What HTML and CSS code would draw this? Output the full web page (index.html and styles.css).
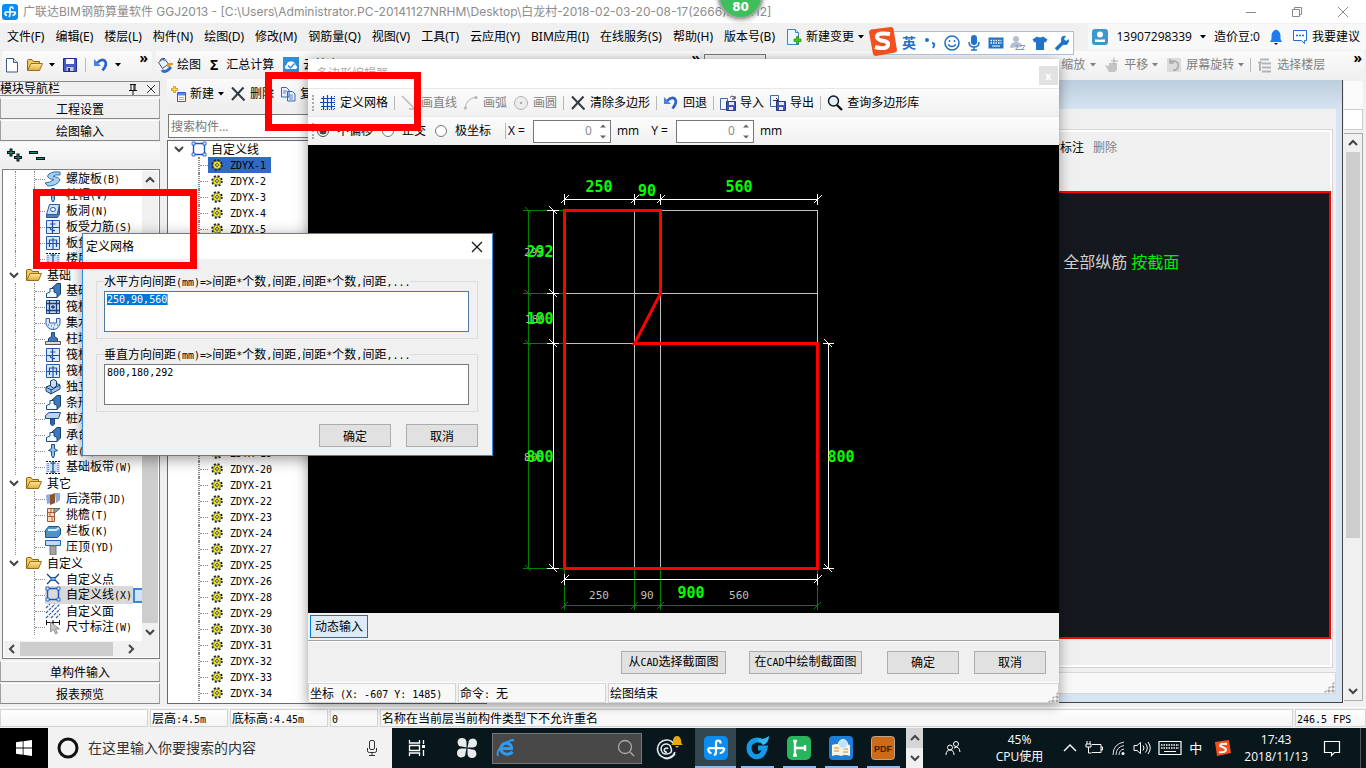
FILE: index.html
```html
<!DOCTYPE html>
<html lang="zh-CN">
<head>
<meta charset="utf-8">
<title>广联达BIM钢筋算量软件 GGJ2013</title>
<link rel="stylesheet" href="styles.css">
</head>
<body>
<svg class="defs" aria-hidden="true">
  <defs>
    <linearGradient id="gFold" x1="0" y1="0" x2="0" y2="1"><stop offset="0" stop-color="#ffe9a0"/><stop offset="1" stop-color="#e3a83a"/></linearGradient>
  </defs>
  <symbol id="logo" viewBox="0 0 16 16"><rect width="16" height="16" rx="3" fill="#0a8cf0"/><path d="M11 5V4.500Q11 3 9.500 3T8 4.500V11Q8 12.500 6.500 12.500M3 8H13.500M3 8Q2.500 11 5 11.500M13.500 8Q13.500 11 10.500 11.500" fill="none" stroke="#fff" stroke-width="1.500"/></symbol>
  <symbol id="doc" viewBox="0 0 16 16"><path d="M2.500 1.500h7l4 4v9.500h-11z" fill="#fff" stroke="#3a5a84"/><path d="M9.500 1.500v4h4" fill="#d7e6f5" stroke="#3a5a84"/></symbol>
  <symbol id="docplus" viewBox="0 0 16 16"><path d="M1.500.5h8l3 3v12h-11z" fill="#eef7ff" stroke="#3b87b8"/><path d="M9.500.5v3h3" fill="#cfe4f4" stroke="#3b87b8"/><path d="M10.500 7.500h2v2.500H15v2.500h-2.500V15h-2v-2.500H8V10h2.500z" fill="#49c31e" stroke="#22880c" stroke-width=".7"/></symbol>
  <symbol id="folder" viewBox="0 0 16 16"><path d="M.5 13V3.500Q.5 2.500 1.500 2.500H5l1.500 2h6V7" fill="#f2c860" stroke="#8a6414"/><path d="M.5 13.500L4 6.500H15.500L12.500 13.500z" fill="url(#gFold)" stroke="#9a7018"/></symbol>
  <symbol id="save" viewBox="0 0 16 16"><path d="M1.500 1.500h13v13h-13z" fill="#4759c4" stroke="#1e2f86"/><path d="M4 2h8v5H4z" fill="#f3f5ff"/><path d="M4.500 10h7v4h-7z" fill="#c3c8dd"/><path d="M6 11h2v3H6z" fill="#22307c"/></symbol>
  <symbol id="undo" viewBox="0 0 16 16"><path d="M4 6Q8 1.500 11.500 3.500Q15 7 9.500 13.500" fill="none" stroke="#2e62c8" stroke-width="2.600"/><path d="M1 2v7h7z" fill="#4c82dd"/></symbol>
  <symbol id="paint" viewBox="0 0 16 16"><path d="M1.500 5.500L7 1l4.500 6-6 4.500z" fill="#e8f0fa" stroke="#36506e"/><path d="M3 4Q5-1 7.500 4" fill="none" stroke="#36506e"/><path d="M10 9q5-3 5-1" stroke="#d39a2c" stroke-width="3" fill="none"/><path d="M5 13q2 3 6 0l3-3" stroke="#2f6ad1" stroke-width="3" fill="none"/></symbol>
  <symbol id="cloud" viewBox="0 0 16 16"><rect width="16" height="16" fill="#2b8ed8"/><path d="M3 12Q.5 9.500 3.500 8Q4 4 8 4.500Q12 4 12.500 8Q15.500 10 13 12z" fill="#fff"/><path d="M5 8.500l2.500 2.500L11.500 6.500" fill="none" stroke="#2b8ed8" stroke-width="1.500"/></symbol>
  <symbol id="newitem" viewBox="0 0 16 16"><path d="M3.500.5h2v2h2v2h-2v2h-2v-2h-2v-2h2z" fill="#ffdc4a" stroke="#b58508" stroke-width=".7"/><path d="M7.500 6.500h8v9h-8z" fill="#fff" stroke="#2f5fb4"/><path d="M8 7h7v2.500H8z" fill="#5b8be0"/><path d="M9 11.500h5M9 13.500h5" stroke="#8db0e8"/></symbol>
  <symbol id="cross" viewBox="0 0 16 16"><path d="M2 1.500L14.500 14.500M13.500 1.500L2 14" stroke="#333a44" stroke-width="2" fill="none"/></symbol>
  <symbol id="copy" viewBox="0 0 16 16"><path d="M1.500 1.500h5l2.500 2.500v7h-7.500zM7.500 5.500h5l2.500 2.500v7h-7.500z" fill="#e7effc" stroke="#3a64b0"/><path d="M3 5h4M3 7h3M9 9h4M9 11h4M9 13h4" stroke="#5b84cc"/></symbol>
  <symbol id="grid" viewBox="0 0 16 16"><path d="M1 3.500h14M0 7.500h14M1 11.500h14M3.500 1v14M7.500 0v15M11.500 1v14" stroke="#1645b4" stroke-width="1.200"/><path d="M14.500 1v14M1 14.500h13" stroke="#1645b4" stroke-dasharray="1 1"/></symbol>
  <symbol id="line" viewBox="0 0 16 16"><path d="M1 1L13 13M14 8v6H8" stroke="#b5b5b5" stroke-width="1.300" fill="none"/></symbol>
  <symbol id="arc" viewBox="0 0 16 16"><path d="M2 14Q3 4 13 2" stroke="#b0b0b0" fill="none"/><circle cx="2.500" cy="13" r="1.500" fill="#b5b5b5"/><circle cx="13" cy="2.500" r="1.500" fill="#b5b5b5"/></symbol>
  <symbol id="circ" viewBox="0 0 16 16"><circle cx="8" cy="8" r="6.500" stroke="#b4b4b4" fill="#ececec"/><circle cx="8" cy="8" r="1" fill="#999"/></symbol>
  <symbol id="imp" viewBox="0 0 16 16"><path d="M.5 3.500h7v11h-7z" fill="#f4f7fd" stroke="#4668a8"/><path d="M6.500 6.500h9v9h-9z" fill="#4356b4" stroke="#27377f"/><path d="M9 7h5v3H9zM9 12h4v3H9z" fill="#e6eaf8"/><path d="M10 2.500q3-3 5 1M15 1v3h-3" fill="none" stroke="#333"/></symbol>
  <symbol id="exp" viewBox="0 0 16 16"><path d="M.5.5h8v11h-8z" fill="#f4f7fd" stroke="#4668a8"/><path d="M6.500 6.500h9v9h-9z" fill="#4356b4" stroke="#27377f"/><path d="M9 7h5v3H9zM9 12h4v3H9z" fill="#e6eaf8"/><path d="M3 5.500h5M6 3l2.500 2.500L6 8" fill="none" stroke="#333"/></symbol>
  <symbol id="mag" viewBox="0 0 16 16"><circle cx="6.500" cy="6" r="5" fill="#dff1ff" stroke="#111" stroke-width="1.400"/><path d="M10 10l5 5" stroke="#111" stroke-width="2.400"/></symbol>
  <symbol id="hand" viewBox="0 0 16 16"><path d="M1 8l4 1V6h8v7l-2 2H5z" fill="#c4c4c4"/><path d="M10 .5v7M7 4h7" stroke="#aaa"/></symbol>
  <symbol id="rot" viewBox="0 0 16 16"><path d="M1 1h14v14H1z" fill="#dcdcdc"/><path d="M4 6a4.500 4.500 0 1 1 3 7M4 2v4h4" fill="none" stroke="#aaa" stroke-width="1.600"/></symbol>
  <symbol id="floor" viewBox="0 0 16 16"><path d="M3 2.500h9M5 6.500h9M5 10.500h9M5 14.500h9M1 5.500h4M3 5v9" stroke="#b4b4b4" stroke-width="2" fill="none"/></symbol>
  <symbol id="gear" viewBox="0 0 12 12"><circle cx="6" cy="6" r="4.800" fill="none" stroke="#222" stroke-width="2" stroke-dasharray="2 1.770"/><circle cx="6" cy="6" r="4" fill="#f6ee12" stroke="#444" stroke-width=".6"/><path d="M6 2.500v7M2.500 6h7" stroke="#b8b000" stroke-width=".7"/><circle cx="6" cy="6" r="1.400" fill="#fff" stroke="#222" stroke-width=".8"/></symbol>
  <symbol id="poly" viewBox="0 0 16 16"><path d="M2.500 2.500h11v11h-11z" fill="none" stroke="#1956c8" stroke-width="1.400"/><path d="M1 1h3v3H1zM12 1h3v3h-3zM1 12h3v3H1zM12 12h3v3h-3z" fill="#dbe9ff" stroke="#1956c8" stroke-width=".8"/></symbol>
  <symbol id="spiral" viewBox="0 0 16 16"><path d="M15 1Q5 0 2.500 5Q3 8 9 8.500Q5 12 0 12l3 3q9 0 12-6Q14 6 8 5.500Q10 3 15 4z" fill="#a9d0f3" stroke="#2b6cb0"/></symbol>
  <symbol id="pile" viewBox="0 0 16 16"><path d="M6.500 1.500h3v4l3 2-3 1v4L8 15l-1.500-2.500v-4l-3-1 3-2z" fill="#8fbbe8" stroke="#184c8c"/></symbol>
  <symbol id="hole" viewBox="0 0 16 16"><path d="M4.500 1.500h10l-2 10H1.500z" fill="#cfe1f5" stroke="#2458a0"/><path d="M1.500 11.500v3h11l2-3v-9l-2 9z" fill="#4f80bc" stroke="#2458a0"/><ellipse cx="8" cy="6.500" rx="2.500" ry="2" fill="#fff" stroke="#2458a0"/></symbol>
  <symbol id="rebar" viewBox="0 0 16 16"><path d="M1.500 1.500h13v13h-13z" fill="#dbe9fb" stroke="#2458b0"/><path d="M2 8.500h12M7.500 2v12M5 5h5.500M5 8q0 4 5 3.500" fill="none" stroke="#1c4ea8" stroke-width="1.200"/></symbol>
  <symbol id="rebar2" viewBox="0 0 16 16"><path d="M1.500 1.500h13v13h-13z" fill="#dbe9fb" stroke="#2458b0"/><path d="M2 8.500h12M4.500 5v7M8 3v11M11.500 5v7M4 5h8" fill="none" stroke="#1c4ea8" stroke-width="1.200"/></symbol>
  <symbol id="strip" viewBox="0 0 16 16"><path d="M1 4h14v9H1z" fill="#cfe1fa"/><path d="M1 2.500h14M1 14.500h14" stroke="#111" stroke-dasharray="2 1"/><path d="M3 4v9M13 4v9" stroke="#555" stroke-dasharray="1 1"/><path d="M5.500 4h5M8 4v9M5.500 13h5" stroke="#2458b0" stroke-width="1.400"/></symbol>
  <symbol id="beam" viewBox="0 0 16 16"><path d="M7 5l5-4.500h3.500V11L12 14.500z" fill="#3f78b8" stroke="#153d6c"/><path d="M1.500 14.500v-4L5 9V5.500h4V9l3 1.500v4z" fill="#eef6ff" stroke="#1c4880"/></symbol>
  <symbol id="raft" viewBox="0 0 16 16"><path d="M1.500 1.500h13v13h-13z" fill="#c4daf5" stroke="#173f80"/><path d="M4.500 2v12M11.500 2v12M2 4.500h12M2 11.500h12M6 8h4M8 6v4" stroke="#173f80" stroke-width="1.300"/></symbol>
  <symbol id="pit" viewBox="0 0 16 16"><path d="M1 3.500h3.500V8h7V3.500H15V9q-2 5.500-7 5.500T1 9z" fill="#dcebfb" stroke="#2a5cae"/><path d="M3 10h1M6 11h1M9 10h1M12 10h1M8 13h1" stroke="#16407c"/></symbol>
  <symbol id="pier" viewBox="0 0 16 16"><path d="M6.500 1.500h3v4l3 2v3h-9v-3l3-2z" fill="#3f75ba" stroke="#1d477f"/><path d="M.5 10.500h15v3H.5z" fill="#d9d9d9" stroke="#555"/></symbol>
  <symbol id="solo" viewBox="0 0 16 16"><path d="M1 8l10-4 4 2v4l-9 5-5-3z" fill="#9cc2e8" stroke="#173f72"/><path d="M1 8l5 3 9-5M6 11v4" fill="none" stroke="#173f72"/><path d="M5.500 2l3-1.500 3 1.500v5l-3 2-3-2z" fill="#cbdff4" stroke="#173f72"/></symbol>
  <symbol id="cap" viewBox="0 0 16 16"><path d="M.5 4.500L4 1.500h11.500l-2 6H.5z" fill="#b9d5f0" stroke="#1c4a86"/><path d="M5.500 8h4v5L7.500 15l-2-2z" fill="#2b65ae" stroke="#1c4a86"/></symbol>
  <symbol id="wall" viewBox="0 0 16 16"><path d="M1 4l5-1v9l-4 1zM10 2h5v7l-4 3z" fill="#8bacd8"/><path d="M5 4l5-2v10l-5 2z" fill="#8a5430"/></symbol>
  <symbol id="eave" viewBox="0 0 16 16"><path d="M2.500 1.500h7v13h-7z" fill="#f8dfc8" stroke="#a4522a"/><path d="M3 5.500h6M3 9.500h6M6 2v3M5 6v3M7 10v4" stroke="#b45c2e"/><path d="M9 1.500h6l-6 5z" fill="#90a8a0" stroke="#51685e"/></symbol>
  <symbol id="rail" viewBox="0 0 16 16"><path d="M.5 7.500l3-4 10 0 2 2v6l-3 3H.5z" fill="#4c94ca" stroke="#1c5484"/><path d="M3 7h8l3-2" stroke="#d3e9f8" stroke-width="2" fill="none"/></symbol>
  <symbol id="coping" viewBox="0 0 16 16"><path d="M.5 1.500h15v5H.5z" fill="#b9dbf8" stroke="#1c62b8"/><path d="M5 7h6v9H5z" fill="#a4a4a4" stroke="#777"/></symbol>
  <symbol id="point" viewBox="0 0 16 16"><path d="M2 3l4 4M10 9l4 4M14 3l-4 4M6 9l-4 4" stroke="#1c3e72" stroke-width="1.200"/><path d="M6 6.500h4v3H6z" fill="#7fb0ec" stroke="#1c5cc0"/></symbol>
  <symbol id="hatch" viewBox="0 0 16 16"><path d="M1 5l4-4M1 10l9-9M1 15L15 1M6 15l9-9M11 15l4-4" stroke="#2a5cae" stroke-width="1.200" stroke-dasharray="3 1"/></symbol>
  <symbol id="dim" viewBox="0 0 16 16"><path d="M1 3.500h14M1.500 1v5M14.500 1v5M8 1v5" stroke="#111"/><path d="M5.500 3v10l3-2.500 2 4.500 2-1-2-4h4z" fill="#c4c4c4" stroke="#777" stroke-width=".7"/></symbol>
  <symbol id="chev" viewBox="0 0 10 10"><path d="M1 3l4 4 4-4" fill="none" stroke="#444" stroke-width="2"/></symbol>
  <symbol id="tri" viewBox="0 0 6 4"><path d="M0 0h6L3 3.500z" fill="currentColor"/></symbol>
</svg>

<header class="title-bar">
  <svg class="i16"><use href="#logo"/></svg>
  <h1>广联达BIM钢筋算量软件 GGJ2013 - [C:\Users\Administrator.PC-20141127NRHM\Desktop\白龙村-2018-02-03-20-08-17(2666).GGJ12]</h1>
  <div class="win-btns">
    <button aria-label="最小化"><svg class="i12" viewBox="0 0 12 12"><path d="M1 6.500h10" stroke="#888"/></svg></button>
    <button aria-label="还原"><svg class="i12" viewBox="0 0 12 12"><path d="M1.500 3.500h7v7h-7zM3.500 3.500v-2h7v7h-2" fill="none" stroke="#888"/></svg></button>
    <button aria-label="关闭"><svg class="i12" viewBox="0 0 12 12"><path d="M1 1l10 10M11 1L1 11" stroke="#888"/></svg></button>
  </div>
</header>

<nav class="menu-bar">
  <button>文件(F)</button><button>编辑(E)</button><button>楼层(L)</button><button>构件(N)</button><button>绘图(D)</button><button>修改(M)</button><button>钢筋量(Q)</button><button>视图(V)</button><button>工具(T)</button><button>云应用(Y)</button><button>BIM应用(I)</button><button>在线服务(S)</button><button>帮助(H)</button><button>版本号(B)</button>
  <button class="with-icon"><svg class="i16"><use href="#docplus"/></svg>新建变更<svg class="tri"><use href="#tri"/></svg></button>
  <div class="account">
    <svg class="i16" viewBox="0 0 16 16"><rect width="16" height="16" rx="3" fill="#3f97cf"/><circle cx="8" cy="5.500" r="3" fill="#fff"/><path d="M3 13V10.500h10V13z" fill="#fff"/><path d="M6.500 9L8 11l1.500-2z" fill="#3f97cf"/></svg>
    <button class="with-icon phone">13907298339<svg class="tri"><use href="#tri"/></svg></button>
    <span>造价豆:0</span>
    <svg class="i16" viewBox="0 0 16 16"><path d="M8 .5Q12.500 2 12.500 7v3l1.500 3H2l1.500-3V7Q3.500 2 8 .5z" fill="#1e7cf0"/><path d="M6 14h4l-2 2z" fill="#111"/></svg>
    <button class="with-icon"><svg class="i16" viewBox="0 0 16 16"><path d="M1.500 1.500h13v10h-2v3l-3-3h-8z" fill="#fff" stroke="#1e6ce0"/><path d="M4 6.500h8" stroke="#1e6ce0" stroke-width="1.500" stroke-dasharray="2 1"/></svg>我要建议</button>
  </div>
</nav>

<div class="tool-bar">
  <div class="band file-band">
    <button aria-label="新建"><svg class="i16"><use href="#doc"/></svg></button>
    <button aria-label="打开" class="with-icon wide"><svg class="i16"><use href="#folder"/></svg><svg class="tri"><use href="#tri"/></svg></button>
    <button aria-label="保存"><svg class="i16"><use href="#save"/></svg></button>
    <i class="sep"></i>
    <button aria-label="撤销" class="with-icon wide"><svg class="i16"><use href="#undo"/></svg><svg class="tri"><use href="#tri"/></svg></button>
    <b class="more">»</b>
  </div>
  <div class="band calc-band">
    <button class="with-icon"><svg class="i16"><use href="#paint"/></svg>绘图</button>
    <button class="with-icon"><b class="sigma">Σ</b>汇总计算</button>
    <button class="with-icon"><svg class="i16"><use href="#cloud"/></svg>云检查</button>
    <b class="more">»</b>
  </div>
  <div class="band view-band">
    <select aria-label="楼层"><option>首层</option></select>
    <button class="with-icon" disabled><span class="zoom">缩放</span><svg class="tri"><use href="#tri"/></svg></button>
    <button class="with-icon" disabled><svg class="i16"><use href="#hand"/></svg>平移<svg class="tri"><use href="#tri"/></svg></button>
    <button class="with-icon" disabled><svg class="i16"><use href="#rot"/></svg>屏幕旋转<svg class="tri"><use href="#tri"/></svg></button>
    <i class="sep"></i>
    <button class="with-icon" disabled><svg class="i16"><use href="#floor"/></svg>选择楼层</button>
    <b class="more">»</b>
  </div>
</div>

<main class="work">
  <aside class="side">
    <div class="side-head"><span>模块导航栏</span>
      <svg class="i12" viewBox="0 0 12 12"><path d="M3 1.500h6M4 2v5M8 2v5M7 2v5M2 7.500h8M6 8v4" stroke="#111" fill="none"/></svg>
      <svg class="i12" viewBox="0 0 12 12"><path d="M2 2l8 8M10 2l-8 8" stroke="#333"/></svg>
    </div>
    <button class="side-btn">工程设置</button>
    <button class="side-btn">绘图输入</button>
    <div class="side-tools">
      <button aria-label="展开"><svg viewBox="0 0 18 16"><path d="M1 5.500h8M5 1.500v8M8 10.500h8M12 6.500v8" stroke="#111" stroke-width="3"/><path d="M2 5.500h6M5 2.500v6M9 10.500h6M12 7.500v6" stroke="#1e8878"/></svg></button>
      <button aria-label="折叠"><svg viewBox="0 0 18 16"><path d="M1 5.500h9M8 11.500h9" stroke="#111" stroke-width="3"/><path d="M2 5.500h7M9 11.500h7" stroke="#1e8878"/></svg></button>
    </div>
    <div class="tree-box">
      <ul class="tree" id="navTree"></ul>
      <div class="vbar"><svg class="i10 flip"><use href="#chev"/></svg><i class="gap-bar"></i><i class="thumb-v"></i><svg class="i10"><use href="#chev"/></svg></div>
      <div class="hbar"><svg class="i10 left"><use href="#chev"/></svg><i></i><svg class="i10 right"><use href="#chev"/></svg></div>
    </div>
    <button class="side-btn">单构件输入</button>
    <button class="side-btn">报表预览</button>
  </aside>

  <section class="list-pane">
    <div class="list-tools">
      <button class="with-icon"><svg class="i16"><use href="#newitem"/></svg>新建<svg class="tri"><use href="#tri"/></svg></button>
      <button class="with-icon"><svg class="i16"><use href="#cross"/></svg>删除</button>
      <button class="with-icon"><svg class="i16"><use href="#copy"/></svg>复制</button>
    </div>
    <input class="search" type="text" placeholder="搜索构件..." aria-label="搜索构件">
    <ul class="comp-list" id="compList"></ul>
  </section>

  <section class="mdi">
    <div class="mdi-panel">
      <div class="mdi-tab">
        <div class="mdi-tools"><button>尺寸标注</button><button disabled>删除</button></div>
        <div class="mdi-canvas"><p>角筋 全部纵筋 <em>按截面</em></p></div>
      </div>
    </div>
    <div class="mdi-status"><i class="grip"></i></div>
  </section>
  <div class="outer-scroll">
    <div class="outer-top"></div>
    <div class="outer-field"></div>
    <div class="vbar outer"><svg class="i10 flip"><use href="#chev"/></svg><i class="thumb-o"></i><i class="rest"></i><svg class="i10"><use href="#chev"/></svg></div>
  </div>
</main>

<footer class="app-status sim">
  <div class="c1"></div><div class="c2">层高:4.5m</div><div class="c3">底标高:4.45m</div><div class="c4">0</div><div class="c5">名称在当前层当前构件类型下不允许重名</div><div class="c6">246.5 FPS</div>
</footer>

<div class="task-bar">
  <button class="start" aria-label="开始"><svg class="i16" viewBox="0 0 16 16"><path d="M0 2.300L6.700 1.300v6.300H0zM7.500 1.200L16 0v7.600H7.500zM0 8.400h6.700v6.300L0 13.700zM7.500 8.400H16V16l-8.500-1.200z" fill="#fff"/></svg></button>
  <label class="cortana">
    <svg class="i22" viewBox="0 0 22 22"><circle cx="11" cy="11" r="9" fill="none" stroke="#111" stroke-width="3"/></svg>
    <input type="text" placeholder="在这里输入你要搜索的内容" aria-label="搜索">
    <svg class="i16" viewBox="0 0 16 16"><rect x="5.500" y=".5" width="5" height="9" rx="1.500" fill="none" stroke="#333"/><path d="M3.500 8v3q0 1.500 2 1.500h5q2 0 2-1.500V8M8 13v2.500M5 15.500h6" fill="none" stroke="#333"/></svg>
  </label>
  <button class="t-btn first" aria-label="任务视图"><svg class="i18" viewBox="0 0 18 18"><path d="M1.500 1v3h10V1M1.500 17v-3h10v3M1.500 6.500h10v5h-10zM15.500 1v4M15.500 11v6" fill="none" stroke="#fff" stroke-width="1.300"/><path d="M14 6h3v3h-3z" fill="#fff"/></svg></button>
  <button class="t-btn" aria-label="浏览器"><svg class="i22" viewBox="0 0 22 22"><g fill="#e6ecee"><path d="M10.500 10.500V5Q10 1 6 1T1.500 5Q2 10 6 9.500z"/><path d="M11.500 10.500H17Q21 10 21 6T17 1.500Q12 2 12.500 6z"/><path d="M11.500 11.500V17Q12 21 16 21T20.500 17Q20 12 16 12.500z"/><path d="M10.500 11.500H5Q1 12 1 16T5 20.500Q10 20 9.500 16z"/></g></svg></button>
  <label class="ie-box">
    <svg class="i20" viewBox="0 0 20 20"><path d="M16.500 14Q13 17 9.500 16Q5 14.500 5 10.500Q5.500 5.500 10 5Q15.500 5.500 15.500 10.500H6" fill="none" stroke="#2d9bf4" stroke-width="3"/><path d="M2 18Q0 14 6 8T18 2" fill="none" stroke="#2d9bf4" stroke-width="1.800"/></svg>
    <input type="text" aria-label="地址">
    <svg class="i18" viewBox="0 0 18 18"><circle cx="8" cy="8" r="6.500" fill="none" stroke="#aaa" stroke-width="1.300"/><path d="M13 13l4 4" stroke="#aaa" stroke-width="1.300"/></svg>
  </label>
  <button class="t-btn" aria-label="提醒"><svg class="i28" viewBox="0 0 28 28"><path d="M19 10A9 9 0 1 0 20 18M16 14a5 5 0 1 0-5 6q7 0 5-6M13 15a2 2 0 1 0-1 3M6 22Q13 28 20 20" fill="none" stroke="#e6ecee" stroke-width="1.600"/><path d="M16 11q2-1 2-5 1-4 4-4t4 4q0 4 2 5zM20 12h4l-2 2z" fill="#e5a912"/></svg></button>
  <button class="app active" aria-label="GGJ2013"><svg class="i24"><use href="#logo"/></svg></button>
  <button class="app" aria-label="浏览器"><svg class="i24" viewBox="0 0 24 24"><path d="M16 4.500Q8 2.500 4.500 9Q2.500 17 9.500 20.500Q18 22 20 12h-7" fill="none" stroke="#1399e8" stroke-width="5"/><path d="M12 3Q18 4 24 0q0 7-6 9z" fill="#36b8f8"/></svg></button>
  <button class="app" aria-label="钢筋"><svg class="i24" viewBox="0 0 24 24"><rect width="24" height="24" rx="5" fill="#27b65e"/><path d="M8 5v15M8 12h11M18 9v6M6 5h4M6 19.500h4" stroke="#fff" stroke-width="2.400"/></svg></button>
  <button class="app" aria-label="资料"><svg class="i24" viewBox="0 0 24 24"><rect width="24" height="24" rx="4" fill="#1f7fd8"/><path d="M3 9q5-2 9 0 4-2 9 0v11q-5-2-9 0-4-2-9 0z" fill="#fff3d8"/><path d="M5 12h5M5 15h5M14 13h5M14 16h5" stroke="#c08a50"/><circle cx="14" cy="8" r="4.500" fill="#bfe2fb" stroke="#e8f4ff"/></svg></button>
  <button class="app" aria-label="PDF"><svg class="i24" viewBox="0 0 24 24"><rect x=".5" y=".5" width="23" height="23" rx="3" fill="#cc6a15" stroke="#b9a795"/><text x="12" y="16" text-anchor="middle" class="pdf">PDF</text></svg></button>
  <div class="t-scroll"><svg class="i10 flip"><use href="#chev"/></svg><svg class="i10"><use href="#chev"/></svg></div>
  <div class="tray">
    <svg class="i16 people" viewBox="0 0 16 16"><circle cx="11" cy="4" r="2.500" fill="none" stroke="#fff"/><circle cx="5" cy="7.500" r="2.500" fill="none" stroke="#fff"/><path d="M1 15q0-5 4-5t4 5M9 8q5-3 6 4" fill="none" stroke="#fff"/></svg>
    <div class="meter"><span>45%</span><span>CPU使用</span></div>
    <svg class="i16" viewBox="0 0 16 16"><path d="M2 11l6-6 6 6" fill="none" stroke="#fff" stroke-width="1.400"/></svg>
    <svg class="i18" viewBox="0 0 18 18"><path d="M7 5.500h9v8H7M16 8h1.500v3H16M2 2v3M5 2v3M1 5h5v3H1zM3.500 8v6h3" fill="none" stroke="#fff"/></svg>
    <svg class="i16" viewBox="0 0 16 16"><path d="M3 15Q3 4 14 2M6 15Q6 7 14 5.500M9 15Q9 10 14 9" fill="none" stroke="#ddd"/><circle cx="13" cy="13.500" r="1.500" fill="#fff"/></svg>
    <svg class="i18" viewBox="0 0 18 18"><path d="M1 6.500h3l3.500-3v11L4 11.500H1zM10 6.500q2 2.500 0 5M12.500 4.500q3.500 4.500 0 9M15 3q4.500 6 0 12" fill="none" stroke="#fff"/></svg>
    <svg class="kbd" viewBox="0 0 24 18"><path d="M1 2.500h22v13H1z" fill="none" stroke="#fff" stroke-width="1.200"/><path d="M3 6h18M3 9h18" stroke="#fff" stroke-width="1.500" stroke-dasharray="1.500 1"/><path d="M6 12.500h12" stroke="#fff"/></svg>
    <span class="ime">中</span>
    <svg class="i16" viewBox="0 0 16 16"><path d="M0 2l14-2 2 13-14 3z" fill="#f4501e"/><path d="M12 4Q5 3 5 6Q11 8 11 10Q10 13 4 12" fill="none" stroke="#fff" stroke-width="2"/></svg>
    <div class="clock"><span>17:43</span><span>2018/11/13</span></div>
    <svg class="i18" viewBox="0 0 18 18"><path d="M1.500 2.500h15v11h-5l-3 3v-3h-7z" fill="none" stroke="#fff" stroke-width="1.200"/></svg>
    <i class="peek"></i>
  </div>
</div>

<section class="editor" aria-label="多边形编辑器">
  <div class="ed-title"><h2>多边形编辑器</h2><button aria-label="关闭">x</button></div>
  <div class="ed-tools">
    <i class="handle"></i>
    <button class="with-icon"><svg class="i16"><use href="#grid"/></svg>定义网格</button><i class="sep"></i>
    <button class="with-icon" disabled><svg class="i16"><use href="#line"/></svg>画直线</button>
    <button class="with-icon" disabled><svg class="i16"><use href="#arc"/></svg>画弧</button>
    <button class="with-icon" disabled><svg class="i16"><use href="#circ"/></svg>画圆</button><i class="sep"></i>
    <button class="with-icon"><svg class="i16"><use href="#cross"/></svg>清除多边形</button><i class="sep"></i>
    <button class="with-icon"><svg class="i16"><use href="#undo"/></svg>回退</button><i class="sep"></i>
    <button class="with-icon"><svg class="i16"><use href="#imp"/></svg>导入</button>
    <button class="with-icon"><svg class="i16"><use href="#exp"/></svg>导出</button><i class="sep"></i>
    <button class="with-icon"><svg class="i16"><use href="#mag"/></svg>查询多边形库</button>
  </div>
  <div class="ed-opts">
    <i class="handle"></i>
    <label><input type="radio" name="off" checked>不偏移</label>
    <label><input type="radio" name="off">正交</label>
    <label><input type="radio" name="off">极坐标</label>
    <i class="sep"></i>
    <label class="coord" for="ox">X =</label>
    <div class="spin"><input id="ox" type="text" value="0"><svg viewBox="0 0 8 16"><path d="M1 4.500l3-3 3 3zM1 12.500l3 3 3-3z" fill="#666"/></svg></div><span class="mm">mm</span>
    <label class="coord" for="oy">Y =</label>
    <div class="spin"><input id="oy" type="text" value="0"><svg viewBox="0 0 8 16"><path d="M1 4.500l3-3 3 3zM1 12.500l3 3 3-3z" fill="#666"/></svg></div><span class="mm">mm</span>
  </div>
  <div class="ed-canvas">
    <svg viewBox="308 145 751 468" preserveAspectRatio="xMidYMid meet">
      <g class="ln grn">
        <path d="M528.500 210V569M523 210.500H564M523 293.500H564M523 343.500H564M523 568.500H564"/>
        <path d="M564.500 569V610M634.500 569V610M660.500 569V610M817.500 569V610M564 605.500H818"/>
        <path d="M525 207l6 6M525 290l6 6M525 340l6 6M525 565l6 6M561 609l7-7M631 609l7-7M657 609l7-7M814 609l7-7"/>
      </g>
      <path class="ln gry" d="M564 210.500H818M564 293.500H818M564 343.500H818M634.500 210V569M660.500 210V569M817.500 210V569"/>
      <g class="ln wht">
        <path d="M564 199.500H818M564.500 194v11M634.500 194v11M660.500 194v11M817.500 194v11M561 203l8-8M631 203l8-8M657 203l8-8M814 203l8-8"/>
        <path d="M553.500 210V569M547 210.500h12M547 293.500h12M547 343.500h12M547 568.500h12M549 206l8 8M549 289l8 8M549 339l8 8M549 564l8 8"/>
        <path d="M828.500 343V569M823 343.500h11M823 568.500h11M824 339l8 8M824 564l8 8"/>
        <path d="M564 579.500H818M564.500 574v11M817.500 574v11M561 583l8-8M814 583l8-8"/>
      </g>
      <path d="M564.500 210.500H660.500V293.500L634.500 343.500H817.500V568.500H564.500z" fill="none" stroke="#f00" stroke-width="3"/>
      <g class="small-dim">
        <text x="599" y="599">250</text><text x="647" y="599">90</text><text x="739" y="599">560</text>
        <text x="534" y="256">292</text><text x="535" y="323">180</text><text x="534" y="461">800</text>
      </g>
      <g class="big-dim">
        <text x="599" y="192">250</text><text x="647" y="196">90</text><text x="739" y="192">560</text>
        <text x="540" y="257">292</text><text x="540" y="324">180</text><text x="540" y="462">800</text>
        <text x="841" y="462">800</text><text x="691" y="598">900</text>
      </g>
    </svg>
  </div>
  <div class="ed-dyn"><button>动态输入</button></div>
  <div class="ed-actions sim"><button class="w-cad">从CAD选择截面图</button><button class="w-cad2">在CAD中绘制截面图</button><button class="w-ok">确定</button><button class="w-ok last">取消</button></div>
  <div class="ed-status sim"><div class="e1">坐标 (X: -607 Y: 1485)</div><div class="e2">命令: 无</div><div class="e3">绘图结束</div><i class="grip"></i></div>
</section>

<section class="dialog" role="dialog" aria-label="定义网格">
  <div class="dlg-title"><h2>定义网格</h2><button aria-label="关闭"><svg class="i12" viewBox="0 0 12 12"><path d="M1 1l10 10M11 1L1 11" stroke="#111" stroke-width="1.200"/></svg></button></div>
  <form class="dlg-body">
    <fieldset><legend class="sim">水平方向间距(mm)=&gt;间距*个数,间距,间距*个数,间距,...</legend>
      <div class="field focus" contenteditable="true" role="textbox" aria-label="水平方向间距"><mark>250,90,560</mark></div></fieldset>
    <fieldset><legend class="sim">垂直方向间距(mm)=&gt;间距*个数,间距,间距*个数,间距,...</legend>
      <textarea class="field" aria-label="垂直方向间距">800,180,292</textarea></fieldset>
    <div class="dlg-btns"><button type="button">确定</button><button type="button">取消</button></div>
  </form>
</section>

<div class="ime-bar">
  <svg class="s-logo" viewBox="0 0 30 30"><path d="M1 5Q1 3 3 2.500L23 0Q25 0 25.500 2L29 23Q29 25 27 25.500L8 29Q5.500 29 5 27z" fill="#f2501e"/><path d="M22 7Q9 5 9 10Q9 13 16 14Q21 15 20 18Q19 23 7 20" fill="none" stroke="#fff" stroke-width="4"/></svg>
  <b>英</b>
  <svg class="i16" viewBox="0 0 16 16"><circle cx="5" cy="5" r="2" fill="#1f74c8"/><path d="M10 8q4 0 1 5" fill="none" stroke="#1f74c8" stroke-width="2"/></svg>
  <svg class="i16" viewBox="0 0 16 16"><circle cx="8" cy="8" r="7" fill="none" stroke="#1f74c8" stroke-width="1.600"/><path d="M5.500 5v2M10.500 5v2M4 9.500q4 4 8 0" fill="none" stroke="#1f74c8" stroke-width="1.400"/></svg>
  <svg class="i16" viewBox="0 0 16 16"><rect x="5" y="0" width="6" height="10" rx="3" fill="#1f74c8"/><path d="M3 7q0 5 5 5t5-5M8 12v3M5 15h6" fill="none" stroke="#1f74c8" stroke-width="1.500"/></svg>
  <svg class="i16" viewBox="0 0 16 16"><path d="M.5 2.500h15v11H.5z" fill="#1f74c8"/><path d="M2.500 5.500h11M2.500 8h11" stroke="#fff" stroke-width="1.400" stroke-dasharray="1.500 1"/><path d="M4 11h8" stroke="#fff"/></svg>
  <svg class="i16" viewBox="0 0 16 16"><circle cx="6" cy="4" r="3" fill="#b3bfd4"/><path d="M0 13q0-6 6-6t6 5z" fill="#b3bfd4"/><path d="M5.500 10.500q3-1 2 1.500l-2 2.500h9M10 10.500h5l-3 4" fill="none" stroke="#8697b8"/></svg>
  <svg class="i16" viewBox="0 0 16 16"><path d="M5 1.500q3 2 6 0l4.500 3-2 3-1.500-.5V15H4V7l-1.500.5-2-3z" fill="#1f74c8"/></svg>
  <svg class="i16" viewBox="0 0 16 16"><path d="M2 14.500L9.500 7" stroke="#1f74c8" stroke-width="3.500"/><path d="M15 4l-3 2-2-2 2-3q-5-1-5 4t4 5q4 0 4-6z" fill="#1f74c8"/></svg>
</div>
<div class="badge">80</div>
<div class="mark mark-a"></div>
<div class="mark mark-b"></div>
<script src="app.js"></script>
</body>
</html>
```

FILE: styles.css
```css
* { box-sizing: border-box; }
html, body { height: 100%; }
body {
  margin: 0; display: flex; flex-direction: column; position: relative; overflow: hidden;
  background: #f0f0f0; color: #000;
  font: 12px/16px "Open Sans", "Noto Sans CJK SC", sans-serif;
}
h1, h2, p, ul { margin: 0; padding: 0; font-size: 12px; font-weight: normal; }
ul { list-style: none; }
button { font: inherit; color: inherit; background: none; border: 0; padding: 0; white-space: nowrap; }
button:disabled { color: #808080; }
input, select, textarea { font: inherit; color: inherit; border-radius: 0; }
svg { flex: none; display: block; }
.defs { position: absolute; width: 0; height: 0; }
.i10 { width: 10px; height: 10px; }
.i12 { width: 12px; height: 12px; }
.i16 { width: 16px; height: 16px; }
.i18 { width: 18px; height: 18px; }
.i20 { width: 20px; height: 20px; }
.i22 { width: 22px; height: 22px; }
.i24 { width: 24px; height: 24px; }
.i28 { width: 28px; height: 28px; }
.tri { width: 6px; height: 4px; }
.flip { transform: rotate(180deg); }
.left { transform: rotate(90deg); }
.right { transform: rotate(-90deg); }
.with-icon { display: flex; align-items: center; gap: 4px; }
.sep { flex: none; width: 1px; height: 14px; background: #b8b8b8; }
.sim, .tree, .comp-list { font-family: "Noto Sans CJK SC", sans-serif; }
.h { font-family: "DejaVu Sans Mono", monospace; font-size: 10px; }
.grip {
  flex: none; width: 12px; height: 12px; margin-left: auto; align-self: flex-end;
  background: radial-gradient(circle, #a8a8a8 1px, transparent 2px) 0 0 / 4px 4px;
  clip-path: polygon(100% 0, 100% 100%, 0 100%);
}

/* title and menus */
.title-bar { flex: none; height: 23px; display: flex; align-items: center; gap: 5px; padding-left: 2px; background: #fff; color: #8c8c8c; }
.title-bar h1 { white-space: nowrap; font-family: Inter, "Noto Sans CJK SC", sans-serif; }
.win-btns { margin-left: auto; display: flex; }
.win-btns button { width: 46px; height: 23px; display: grid; place-items: center; }
.menu-bar { flex: none; height: 28px; display: flex; align-items: center; gap: 11px; padding-left: 7px; background: #f0f0f0; font-family: "Noto Sans", "Noto Sans CJK SC", sans-serif; }
.account { margin-left: auto; height: 26px; display: flex; align-items: center; gap: 8px; padding: 0 6px 0 4px; background: #f8f8f8; font-family: "Open Sans", "Noto Sans CJK SC", sans-serif; }
.account .phone { gap: 8px; }

.tool-bar { flex: none; height: 28px; display: flex; gap: 4px; padding: 0 2px; }
.band { display: flex; align-items: center; background: linear-gradient(#fbfbfb, #efefef); border-radius: 3px; }
.more { align-self: flex-start; font-size: 14px; line-height: 14px; }
.file-band { width: 150px; padding: 0 4px 0 2px; gap: 7px; }
.file-band .wide { gap: 6px; }
.file-band .more { margin-left: auto; }
.calc-band { width: 544px; padding-left: 1px; gap: 9px; }
.calc-band .more { margin-left: auto; }
.sigma { font-size: 14px; margin-right: 4px; }
.view-band { flex: 1; gap: 8px; padding-right: 2px; }
.view-band select { width: 62px; height: 22px; border: 1px solid #777; background: #f4f4f4; margin-right: auto; }
.view-band .zoom { margin-right: 1px; }
.view-band .sep { margin: 0 -2px; }
.view-band .more { margin-left: 20px; }

/* workspace */
.work { flex: 1; min-height: 0; display: flex; }
.side { flex: none; width: 161px; display: flex; flex-direction: column; padding: 2px 1px 3px 0; gap: 1px; }
.side-head { height: 15px; display: flex; align-items: center; gap: 6px; padding-right: 2px; border: 1px solid #888; border-left: 0; margin-bottom: 1px; }
.side-head span { margin-right: auto; }
.side-btn { flex: none; height: 21px; border: 1px solid #a0a0a0; border-top-color: #fff; border-bottom-color: #888; background: #f0f0f0; font-family: "Noto Sans CJK SC", sans-serif; }
.side-tools { height: 26px; display: flex; gap: 4px; padding: 5px 6px; background: linear-gradient(#fbfbfb, #eee); }
.side-tools svg { width: 18px; height: 16px; }
.tree-box { flex: 1; min-height: 0; margin: 0 0 1px 2px; display: grid; grid-template: 1fr 16px / 1fr 16px; border: 1px solid #7c7c7c; padding: 1px; background: #fff; }
.tree { overflow: hidden; min-width: 0; min-height: 0; }
.tree li, .comp-list li { display: flex; align-items: center; height: 16px; white-space: nowrap; }
.trunk, .branch { flex: none; align-self: stretch; border-left: 1px dotted #888; }
.tree .trunk { width: 19px; margin-left: 11px; }
.tree .trunk.end { border-color: transparent; }
.branch { width: 11px; display: flex; align-items: center; }
.branch::after { content: ""; flex: 1; border-top: 1px dotted #888; }
.tree li.folder { padding-left: 5px; }
.tree .folder .i16 { margin: 0 5px 0 7px; }
.tree .label { padding: 0 1px 0 5px; }
.tree .sel { background: #d9d9d9; display: flex; }
.tree .edge { flex: none; width: 12px; height: 15px; border: 2px solid #3a86d8; background: #cfe4fa; }
.vbar { display: flex; flex-direction: column; align-items: center; background: #f0f0f0; padding: 4px 0; gap: 4px; }
.vbar .gap-bar { flex: 2; }
.vbar .thumb-v { flex: 5; width: 100%; background: #cdcdcd; }
.hbar { grid-column: 1 / 3; display: flex; align-items: center; gap: 3px; padding: 0 22px 0 3px; background: #f0f0f0; }
.hbar i { flex: 1; margin-right: 10px; height: 14px; background: #cdcdcd; }

.list-pane { flex: none; width: 320px; margin-left: 6px; display: flex; flex-direction: column; padding-bottom: 3px; }
.list-tools { height: 30px; display: flex; align-items: center; gap: 6px; padding-left: 3px; background: linear-gradient(#fafafa, #eee); }
.search { height: 24px; margin: 5px 0 2px 1px; padding: 0 2px; border: 1px solid #777; background: #fff; }
.search::placeholder { color: #777; opacity: 1; }
.comp-list { flex: 1; min-height: 0; overflow: hidden; border: 1px solid #666a78; padding: 0 0 0 6px; background: #fff; }
.comp-list .root { gap: 4px; }
.comp-list .root .i16 { margin-left: 3px; }
.comp-list .trunk { width: 0; margin-left: 24px; }
.comp-list .branch { width: 9px; }
.comp-list .item { display: flex; align-items: center; height: 16px; padding: 0 5px 0 3px; gap: 7px; }
.comp-list .item.sel { background: #316ac5; }

.mdi { flex: 1; display: flex; flex-direction: column; margin: 1px 0 4px; padding: 29px 6px 8px; border-right: 1px solid #444; border-bottom: 1px solid #444; background: linear-gradient(#bccddd, #d7e4f2 30px); }
.mdi-panel { flex: 1; min-height: 0; display: flex; padding: 20px 3px 4px; background: #f0f0f0; }
.mdi-tab { flex: 1; display: flex; flex-direction: column; padding: 4px 1px 28px; border: 1px solid #d4d4d4; box-shadow: inset 0 0 0 2px #fff; }
.mdi-tools { height: 27px; display: flex; align-items: center; gap: 9px; margin-bottom: 30px; padding-left: 538px; }
.mdi-canvas { flex: 1; border: 2px solid #f00; background: #15181f; color: #d0d0d0; }
.mdi-canvas p { padding: 58px 0 0 527px; font-size: 16px; line-height: 22px; white-space: nowrap; }
.mdi-canvas em { font-style: normal; color: #00f000; }
.mdi-status { height: 22px; display: flex; border: 1px solid #d8d8d8; background: #f8f8f8; }
.outer-scroll { flex: none; width: 23px; display: flex; flex-direction: column; padding: 2px 3px 6px 1px; }
.outer-top { height: 28px; background: #fafafa; }
.outer-field { height: 21px; border: 1px solid #ccc; border-left: 0; background: #fff; }
.vbar.outer { flex: 1; margin-top: 3px; border: 1px solid #aaa; border-left: 0; }
.thumb-o { flex: 392; width: 14px; background: #cdcdcd; }
.rest { flex: 142; }

.app-status { flex: none; height: 21px; display: flex; gap: 2px; padding: 1px 0; border-top: 1px solid #fff; background: #f0f0f0; }
.app-status div { border: 1px solid #d4d4d4; padding-left: 1px; line-height: 16px; white-space: nowrap; background: linear-gradient(#fff, #f4f4f4); }
.c1 { width: 148px; } .c2 { width: 78px; } .c3 { width: 98px; } .c4 { width: 48px; } .c5 { flex: 1; } .c6 { width: 71px; }

/* taskbar */
.task-bar { flex: none; height: 40px; display: flex; align-items: center; background: #08171c; color: #fff; }
.start { width: 48px; height: 40px; display: grid; place-items: center; background: #000; }
.cortana { width: 344px; height: 40px; display: flex; align-items: center; gap: 7px; padding: 0 12px 0 9px; background: #f2f2f2; color: #333; font-size: 14px; }
.cortana input { flex: 1; min-width: 0; border: 0; background: none; }
.cortana input::placeholder { color: #333; opacity: 1; }
.t-btn { width: 50px; height: 40px; display: grid; place-items: center; }
.ie-box { width: 150px; height: 31px; display: flex; align-items: center; padding: 0 6px 0 3px; border: 1px solid #777; background: #484848; }
.ie-box input { flex: 1; min-width: 0; border: 0; background: none; }
.ie-box + .t-btn { width: 53px; }
.app { width: 42px; height: 40px; display: flex; flex-direction: column; align-items: center; justify-content: space-between; padding-top: 8px; }
.app::after { content: ""; width: 33px; height: 2px; background: #80bfff; }
.app.active { width: 41px; background: #34464d; }
.app.active::after { width: 41px; }
.pdf { font: bold 9px "Liberation Sans", sans-serif; fill: #3c2008; }
.t-scroll { width: 17px; height: 40px; margin-left: 2px; display: flex; flex-direction: column; align-items: center; justify-content: space-around; background: linear-gradient(#d5d5d5 50%, #f0f0f0 50%); }
.tray { flex: 1; display: flex; align-items: center; justify-content: flex-end; gap: 7px; }
.people { margin: 0 auto 0 22px; }
.meter, .clock { display: flex; flex-direction: column; align-items: center; line-height: 17px; }
.meter { margin-right: 12px; }
.clock { margin: 0 8px 0 6px; }
.kbd { width: 24px; height: 18px; }
.ime { font-size: 13px; margin-right: 6px; }
.peek { width: 1px; height: 40px; margin: 0 5px 0 12px; background: #555; }

/* polygon editor window */
.editor { position: absolute; left: 308px; top: 59px; width: 751px; display: flex; flex-direction: column; background: #f0f0f0; box-shadow: 0 2px 12px rgba(0, 0, 0, .4); }
.ed-title { height: 29px; display: flex; align-items: center; justify-content: space-between; padding-left: 8px; background: #fff; color: #aaa; }
.ed-title button { width: 19px; height: 19px; margin-top: 4px; margin-right: 1px; background: #e2e2e2; color: #fff; font-weight: bold; font-size: 10px; }
.ed-tools, .ed-opts { height: 28px; display: flex; align-items: center; background: linear-gradient(#fcfcfc, #f0f0f0); border-top: 1px solid #e8e8e8; }
.ed-tools { gap: 6px; padding-left: 4px; }
.handle { flex: none; width: 1px; height: 16px; border-left: 2px dotted #aaa; }
.ed-opts { height: 29px; padding-left: 4px; }
.ed-opts label { display: flex; align-items: center; gap: 8px; margin-left: 3px; }
.ed-opts input[type="radio"] { width: 12px; height: 12px; margin: 0; accent-color: #444; }
.ed-opts label + label { margin-left: 9px; }
.ed-opts .sep { height: 16px; margin-left: 14px; }
.ed-opts .coord { margin: 0 8px 0 2px; }
.ed-opts .mm { margin: 0 10px 0 6px; }
.spin { width: 78px; height: 23px; display: flex; align-items: center; border: 1px solid #777; background: #fff; color: #888; padding-right: 3px; }
.spin input { flex: 1; min-width: 0; border: 0; background: none; text-align: right; padding: 0 7px 0 0; }
.spin svg { width: 8px; height: 16px; }
.ed-canvas { background: #000; }
.ed-canvas svg { width: 100%; height: auto; }
.ln { fill: none; stroke-width: 1; }
.grn { stroke: #008000; }
.gry { stroke: #c0c0c0; }
.wht { stroke: #fff; }
.small-dim { font: 11px "DejaVu Sans Mono", monospace; fill: #c0c0c0; text-anchor: middle; }
.big-dim { font: bold 15px "DejaVu Sans Mono", monospace; fill: #0f0; text-anchor: middle; }
.ed-dyn { height: 28px; padding: 2px; border-bottom: 1px solid #a0a0a0; }
.ed-dyn button { display: block; width: 58px; height: 23px; border: 1px solid #0078d7; background: #dcebf7; }
.ed-actions { height: 41px; display: flex; align-items: center; justify-content: flex-end; padding-right: 13px; border-top: 1px solid #fff; }
.ed-actions button, .dlg-btns button { height: 23px; border: 1px solid #adadad; background: #e1e1e1; }
.w-cad { width: 105px; margin-right: 23px; }
.w-cad2 { width: 113px; margin-right: 25px; }
.w-ok { width: 72px; margin-right: 15px; }
.w-ok.last { margin-right: 0; }
.ed-status { height: 21px; display: flex; gap: 2px; border-top: 1px solid #fff; }
.ed-status div { border: 1px solid #d4d4d4; padding-left: 1px; line-height: 17px; background: #f8f8f8; white-space: pre; }
.e1 { width: 148px; } .e2 { width: 148px; } .e3 { flex: 1; }
.ed-status .grip { margin-left: -14px; }

/* grid dialog */
.dialog { position: absolute; left: 82px; top: 233px; width: 411px; border: 1px solid #2a8ae6; background: #f0f0f0; box-shadow: 0 3px 14px rgba(0, 0, 0, .4); }
.dlg-title { height: 25px; display: flex; align-items: center; justify-content: space-between; padding: 0 9px 0 3px; background: #fff; }
.dlg-body { padding: 14px 14px 8px 13px; display: flex; flex-direction: column; gap: 7px; }
fieldset { margin: 0; padding: 2px 8px 6px 7px; border: 1px solid #dcdcdc; min-width: 0; }
legend { padding: 0; height: 16px; white-space: nowrap; }
.field { display: block; width: 100%; height: 41px; margin: 0; padding: 1px 2px; border: 1px solid #7a7a7a; background: #fff; resize: none; overflow: hidden; font: 10px/14px "DejaVu Sans Mono", monospace; }
.field.focus { border-color: #51789f; outline: 0; }
.field mark { background: #0078d7; color: #fff; border-right: 1px solid #e89050; }
.dlg-btns { display: flex; justify-content: flex-end; gap: 15px; margin-top: 5px; }
.dlg-btns button { width: 72px; font-family: "Noto Sans CJK SC", sans-serif; }

/* floating overlays */
.ime-bar { position: absolute; left: 882px; top: 31px; height: 24px; display: flex; align-items: center; gap: 6px; padding: 0 3px 0 19px; border: 1px solid #a8c0d8; background: #fff; color: #1f74c8; font-size: 14px; }
.s-logo { position: absolute; left: -15px; top: -5px; width: 30px; height: 30px; }
.badge { position: absolute; left: 718px; top: -26px; width: 45px; height: 45px; border-radius: 50%; border: 2px solid #a9a9a9; background: #3fbf5c; color: #fff; font: bold 12px/62px "DejaVu Sans", sans-serif; text-align: center; box-shadow: 0 1px 5px rgba(0, 0, 0, .4); }
.mark { position: absolute; border: 7px solid #f00; pointer-events: none; }
.mark-a { left: 265px; top: 72px; width: 156px; height: 59px; }
.mark-b { left: 33px; top: 189px; width: 164px; height: 80px; }
```

FILE: app.js
```js
const icon = (id, cls) => `<svg class="${cls}"><use href="#${id}"/></svg>`;
const nav = [
  ['spiral', '螺旋板(B)'], ['pile', '柱帽(V)'], ['hole', '板洞(N)'], ['rebar', '板受力筋(S)'],
  ['rebar2', '板负筋(F)'], ['strip', '楼层板带(H)'],
  '基础', ['beam', '基础梁(F)'], ['raft', '筏板基础(M)'], ['pit', '集水坑(K)'], ['pier', '柱墩(Y)'],
  ['rebar', '筏板主筋(R)'], ['rebar2', '筏板负筋(X)'], ['solo', '独立基础(P)'], ['beam', '条形基础(T)'],
  ['cap', '桩承台(V)'], ['beam', '承台梁(F)'], ['pile', '桩(U)'], ['strip', '基础板带(W)'],
  '其它', ['wall', '后浇带(JD)'], ['eave', '挑檐(T)'], ['rail', '栏板(K)'], ['coping', '压顶(YD)'],
  '自定义', ['point', '自定义点'], ['poly', '自定义线(X)', true], ['hatch', '自定义面'], ['dim', '尺寸标注(W)']
];
let last = false;
document.getElementById('navTree').innerHTML = nav.map(n => {
  if (typeof n === 'string') {
    last = n === '自定义';
    return `<li class="folder">${icon('chev', 'i10')}${icon('folder', 'i16')}<span>${n}</span></li>`;
  }
  const body = `${icon(n[0], 'i16')}<span class="label">${n[1]}</span>`;
  return `<li><i class="trunk${last ? ' end' : ''}"></i><i class="branch"></i>` +
    (n[2] ? `<span class="sel">${body}</span><i class="edge"></i>` : body) + '</li>';
}).join('');

const ids = [];
for (let i = 1; i <= 24; i++) ids.push(i);
ids.push(27, 25, 26, 28, 29, 30, 31, 32, 33, 34);
document.getElementById('compList').innerHTML =
  `<li class="root">${icon('chev', 'i10')}${icon('poly', 'i16')}<span>自定义线</span></li>` +
  ids.map(i => `<li><i class="trunk"></i><i class="branch"></i><span class="item${i === 1 ? ' sel' : ''}">${icon('gear', 'i12')}<span>ZDYX-${i}</span></span></li>`).join('');

// Half-width runs inside full-width labels use the narrow monospaced face.
document.querySelectorAll('.sim, .tree, .comp-list').forEach(root => {
  const walker = document.createTreeWalker(root, NodeFilter.SHOW_TEXT);
  const nodes = [];
  while (walker.nextNode()) nodes.push(walker.currentNode);
  nodes.forEach(node => {
    if (!/[\x21-\x7e]/.test(node.data)) return;
    const frag = document.createDocumentFragment();
    node.data.split(/([\x20-\x7e]+)/).filter(Boolean).forEach(part => {
      if (/^[\x20-\x7e]+$/.test(part) && part.trim()) {
        const s = document.createElement('span');
        s.className = 'h';
        s.textContent = part;
        frag.append(s);
      } else frag.append(part);
    });
    node.replaceWith(frag);
  });
});
```
